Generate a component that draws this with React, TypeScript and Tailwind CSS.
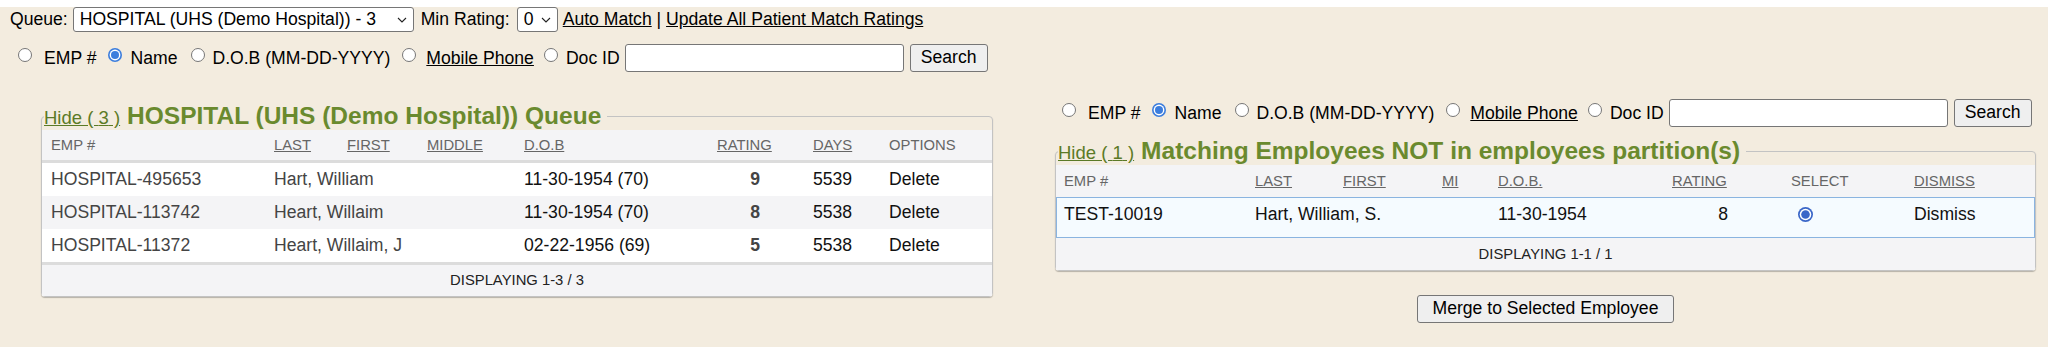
import React from 'react';

const Radio = ({
  checked = false,
  className = '',
  color = '#3b7ddd',
  size = 14,
}: {
  checked?: boolean;
  className?: string;
  color?: string;
  size?: number;
}) => (
  <svg width={size} height={size} viewBox="0 0 14 14" className={`shrink-0 ${className}`}>
    {checked ? (
      <>
        <circle cx="7" cy="7" r="7" fill={color} />
        <circle cx="7" cy="7" r="5.4" fill="#fff" />
        <circle cx="7" cy="7" r="4" fill={color} />
      </>
    ) : (
      <circle cx="7" cy="7" r="6.5" fill="#fff" stroke="#767676" strokeWidth="1" />
    )}
  </svg>
);

const Chevron = () => (
  <svg width="10" height="6" viewBox="0 0 10 6" className="shrink-0">
    <path d="M1 1 L5 5 L9 1" fill="none" stroke="#222" strokeWidth="1.1" />
  </svg>
);

const FakeSelect = ({ label, className = '' }: { label: string; className?: string }) => (
  <div className={`h-[25px] flex items-center justify-between bg-white border border-[#767676] rounded-[3px] pl-[6px] pr-[6px] ${className}`}>
    <span className="whitespace-nowrap">{label}</span>
    <Chevron />
  </div>
);

const SearchRow = ({ className = '' }: { className?: string }) => (
  <div className={`flex items-start h-[28px] leading-[28px] whitespace-nowrap ${className}`}>
    <Radio className="mt-[4px]" />
    <span className="ml-[12px]">EMP #</span>
    <Radio checked className="ml-[12px] mt-[4px]" />
    <span className="ml-[8px]">Name</span>
    <Radio className="ml-[14px] mt-[4px]" />
    <span className="ml-[7px]">D.O.B (MM-DD-YYYY)</span>
    <Radio className="ml-[12px] mt-[4px]" />
    <span className="ml-[10px] underline">Mobile Phone</span>
    <Radio className="ml-[10px] mt-[4px]" />
    <span className="ml-[8px]">Doc ID</span>
    <div className="ml-[5px] w-[279px] h-[28px] bg-white border border-[#767676] rounded-[3px]" />
    <button className="ml-[6px] w-[78px] h-[28px] bg-[#efefef] border border-[#767676] rounded-[3px] leading-none">
      Search
    </button>
  </div>
);

const Legend = ({ count, title }: { count: number; title: string }) => (
  <legend className="ml-[2px] pr-[6px] h-[28px] leading-[28px] whitespace-nowrap">
    <a className="text-[18.5px] text-[#5b7a26] underline">Hide ( {count} )</a>
    <span className="ml-[7px] text-[24.5px] font-bold text-[#6a8a2e]">{title}</span>
  </legend>
);

const queueRows = [
  { emp: 'HOSPITAL-495653', name: 'Hart, William', dob: '11-30-1954 (70)', rating: 9, days: 5539 },
  { emp: 'HOSPITAL-113742', name: 'Heart, Willaim', dob: '11-30-1954 (70)', rating: 8, days: 5538 },
  { emp: 'HOSPITAL-11372', name: 'Heart, Willaim, J', dob: '02-22-1956 (69)', rating: 5, days: 5538 },
];

const leftCols = 'grid grid-cols-[223px_73px_80px_97px_193px_96px_76px_1fr]';
const rightCols = 'grid grid-cols-[191px_88px_99px_56px_174px_119px_123px_1fr]';

const QueuePanel = () => (
  <fieldset className="min-w-0 border border-[#c3c3c3] rounded-[4px] shadow-[0_1px_1px_rgba(0,0,0,0.25)]">
    <Legend count={3} title="HOSPITAL (UHS (Demo Hospital)) Queue" />
    <div className={`${leftCols} items-center h-[33px] pl-[9px] bg-[#f4f4f6] border-b-[3px] border-[#dcdcdc] text-[14.8px] text-[#666]`}>
      <span>EMP #</span>
      <span className="underline">LAST</span>
      <span className="underline">FIRST</span>
      <span className="underline">MIDDLE</span>
      <span className="underline">D.O.B</span>
      <span className="underline">RATING</span>
      <span className="underline">DAYS</span>
      <span>OPTIONS</span>
    </div>
    {queueRows.map((r, i) => (
      <div
        key={r.emp}
        className={`${leftCols} items-center h-[33px] pl-[9px] ${i % 2 === 1 ? 'bg-[#f4f4f6]' : 'bg-white'}`}
      >
        <span className="text-[#444]">{r.emp}</span>
        <span className="col-span-3 text-[#444]">{r.name}</span>
        <span className="text-[#111]">{r.dob}</span>
        <span className="text-right pr-[53px] font-bold text-[#444]">{r.rating}</span>
        <span className="text-[#111]">{r.days}</span>
        <span className="text-[#111]">Delete</span>
      </div>
    ))}
    <div className="h-[34px] flex items-center justify-center bg-[#f4f4f6] border-t-[3px] border-[#dcdcdc] text-[14.8px] text-[#222]">
      DISPLAYING 1-3 / 3
    </div>
  </fieldset>
);

const MatchPanel = () => (
  <fieldset className="min-w-0 border border-[#c3c3c3] rounded-[4px] shadow-[0_1px_1px_rgba(0,0,0,0.25)]">
    <Legend count={1} title="Matching Employees NOT in employees partition(s)" />
    <div className={`${rightCols} items-center h-[32px] pl-[8px] bg-[#f4f4f6] text-[14.8px] text-[#666]`}>
      <span>EMP #</span>
      <span className="underline">LAST</span>
      <span className="underline">FIRST</span>
      <span className="underline">MI</span>
      <span className="underline">D.O.B.</span>
      <span className="underline">RATING</span>
      <span>SELECT</span>
      <span className="underline">DISMISS</span>
    </div>
    <div className={`${rightCols} items-center h-[41px] pl-[7px] pb-[6px] bg-[#f5fbff] border border-[#8ab4e0] text-[#111]`}>
      <span>TEST-10019</span>
      <span className="col-span-3">Hart, William, S.</span>
      <span>11-30-1954</span>
      <span className="text-right pr-[63px]">8</span>
      <span className="flex">
        <Radio checked color="#3a66c8" size={15} className="ml-[7px]" />
      </span>
      <span>Dismiss</span>
    </div>
    <div className="h-[32px] flex items-center justify-center bg-[#f4f4f6] text-[14.8px] text-[#222]">
      DISPLAYING 1-1 / 1
    </div>
  </fieldset>
);

export default function App() {
  return (
    <div className="w-[2048px] min-h-[347px] bg-[#f3ecdf] text-black text-[17.6px] font-['Liberation_Sans',Arial,sans-serif]">
      {/* Queue controls */}
      <div className="flex items-center h-[25px] mt-[7px] pl-[10px] whitespace-nowrap">
        <span>Queue:</span>
        <FakeSelect className="ml-[5px] w-[341px]" label="HOSPITAL (UHS (Demo Hospital)) - 3" />
        <span className="ml-[7px]">Min Rating:</span>
        <FakeSelect className="ml-[7px] w-[41px]" label="0" />
        <a className="ml-[5px] underline">Auto Match</a>
        <span className="whitespace-pre"> | </span>
        <a className="underline">Update All Patient Match Ratings</a>
      </div>

      <SearchRow className="mt-[12px] pl-[18px]" />

      <div className="flex items-start mt-[27px]">
        {/* Left: queue */}
        <div className="ml-[41px] mt-[3px] w-[952px]">
          <QueuePanel />
        </div>

        {/* Right: matches */}
        <div className="ml-[62px] w-[981px]">
          <SearchRow className="pl-[7px]" />
          <div className="mt-[10px]">
            <MatchPanel />
          </div>
          <div className="flex justify-center mt-[24px]">
            <button className="w-[257px] h-[28px] bg-[#efefef] border border-[#767676] rounded-[3px] leading-none">
              Merge to Selected Employee
            </button>
          </div>
        </div>
      </div>
    </div>
  );
}
